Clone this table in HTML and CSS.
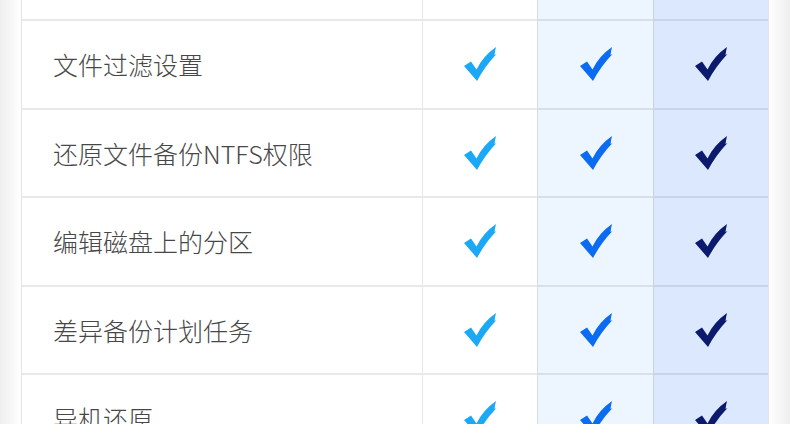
FILE: index.html
```html
<!DOCTYPE html>
<html lang="zh-CN">
<head>
  <meta charset="UTF-8" />
  <meta name="viewport" content="width=device-width, initial-scale=1.0"/>
  <title>功能对比</title>
  <link rel="stylesheet" href="styles.css">
</head>
<body>
  <svg width="0" height="0" class="defs">
    <symbol id="tick" viewBox="0 0 34 34">
      <path d="M1 19 L8 14.5 L13.5 22.5 Q20 9 33 0 Q32 4 31.5 8 L33.5 7 Q22 19 14 34 Z"/>
    </symbol>
  </svg>

  <div class="table">
    <div class="row row-top">
      <div class="cell label"></div>
      <div class="cell col-a"></div>
      <div class="cell col-b"></div>
      <div class="cell col-c"></div>
    </div>

    <div class="row">
      <div class="cell label">文件过滤设置</div>
      <div class="cell col-a"><svg class="tick"><use href="#tick"/></svg></div>
      <div class="cell col-b"><svg class="tick"><use href="#tick"/></svg></div>
      <div class="cell col-c"><svg class="tick"><use href="#tick"/></svg></div>
    </div>

    <div class="row">
      <div class="cell label">还原文件备份NTFS权限</div>
      <div class="cell col-a"><svg class="tick"><use href="#tick"/></svg></div>
      <div class="cell col-b"><svg class="tick"><use href="#tick"/></svg></div>
      <div class="cell col-c"><svg class="tick"><use href="#tick"/></svg></div>
    </div>

    <div class="row">
      <div class="cell label">编辑磁盘上的分区</div>
      <div class="cell col-a"><svg class="tick"><use href="#tick"/></svg></div>
      <div class="cell col-b"><svg class="tick"><use href="#tick"/></svg></div>
      <div class="cell col-c"><svg class="tick"><use href="#tick"/></svg></div>
    </div>

    <div class="row">
      <div class="cell label">差异备份计划任务</div>
      <div class="cell col-a"><svg class="tick"><use href="#tick"/></svg></div>
      <div class="cell col-b"><svg class="tick"><use href="#tick"/></svg></div>
      <div class="cell col-c"><svg class="tick"><use href="#tick"/></svg></div>
    </div>

    <div class="row">
      <div class="cell label">异机还原</div>
      <div class="cell col-a"><svg class="tick"><use href="#tick"/></svg></div>
      <div class="cell col-b"><svg class="tick"><use href="#tick"/></svg></div>
      <div class="cell col-c"><svg class="tick"><use href="#tick"/></svg></div>
    </div>
  </div>
</body>
</html>
```

FILE: styles.css
```css
html, body {
    height: 100%;
}

body {
    margin: 0;
    overflow: hidden;
    font-family: "Noto Sans CJK SC", "Noto Sans", sans-serif;
    background: linear-gradient(to right, #eeeeee, #ffffff 21px, #ffffff calc(100% - 21px), #eeeeee);
}

.defs {
    position: absolute;
}

.table {
    width: 748px;
    margin-left: 21px;
    border-left: 1px solid #e4e4e4;
    border-right: 1px solid #e4e4e4;
    box-sizing: border-box;
    background: #fff;
}

.row {
    display: grid;
    grid-template-columns: 400px 115px 116px 115px;
    height: 88.5px;
}

.row-top {
    height: 21px;
}

.cell {
    display: flex;
    align-items: center;
    justify-content: center;
    border-bottom: 2px solid rgba(0, 0, 0, 0.085);
    box-sizing: border-box;
}

.label {
    justify-content: flex-start;
    padding-left: 31px;
    font-size: 25px;
    font-weight: 300;
    color: #474747;
}

.col-a,
.col-b,
.col-c {
    border-left: 1px solid rgba(0, 0, 0, 0.09);
}

.col-a {
    color: #1ba9f7;
}

.col-b {
    background: #edf5ff;
    color: #0b6cf2;
}

.col-c {
    background: #dce8fd;
    color: #0b1a6c;
}

.tick {
    width: 34px;
    height: 34px;
    fill: currentColor;
    margin-top: 0;
}
```
